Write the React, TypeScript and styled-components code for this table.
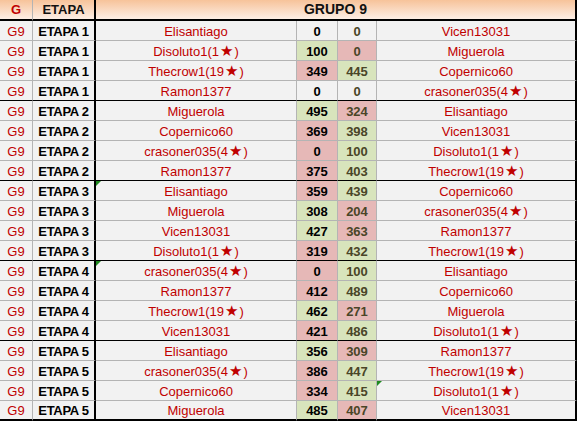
import React from 'react'
import styled, { createGlobalStyle } from 'styled-components'

type Fill = 'none' | 'win' | 'lose'

interface Match {
  etapa: number
  home: string
  homeScore: number
  awayScore: number
  away: string
  homeFill: Fill
  awayFill: Fill
  noteHome?: boolean
  noteAway?: boolean
}

const rows: Match[] = [
  { etapa: 1, home: 'Elisantiago', homeScore: 0, awayScore: 0, away: 'Vicen13031', homeFill: 'none', awayFill: 'none' },
  { etapa: 1, home: 'Disoluto1(1★)', homeScore: 100, awayScore: 0, away: 'Miguerola', homeFill: 'win', awayFill: 'lose' },
  { etapa: 1, home: 'Thecrow1(19★)', homeScore: 349, awayScore: 445, away: 'Copernico60', homeFill: 'lose', awayFill: 'win' },
  { etapa: 1, home: 'Ramon1377', homeScore: 0, awayScore: 0, away: 'crasoner035(4★)', homeFill: 'none', awayFill: 'none' },
  { etapa: 2, home: 'Miguerola', homeScore: 495, awayScore: 324, away: 'Elisantiago', homeFill: 'win', awayFill: 'lose' },
  { etapa: 2, home: 'Copernico60', homeScore: 369, awayScore: 398, away: 'Vicen13031', homeFill: 'lose', awayFill: 'win' },
  { etapa: 2, home: 'crasoner035(4★)', homeScore: 0, awayScore: 100, away: 'Disoluto1(1★)', homeFill: 'lose', awayFill: 'win' },
  { etapa: 2, home: 'Ramon1377', homeScore: 375, awayScore: 403, away: 'Thecrow1(19★)', homeFill: 'lose', awayFill: 'win' },
  { etapa: 3, home: 'Elisantiago', homeScore: 359, awayScore: 439, away: 'Copernico60', homeFill: 'lose', awayFill: 'win', noteHome: true },
  { etapa: 3, home: 'Miguerola', homeScore: 308, awayScore: 204, away: 'crasoner035(4★)', homeFill: 'win', awayFill: 'lose' },
  { etapa: 3, home: 'Vicen13031', homeScore: 427, awayScore: 363, away: 'Ramon1377', homeFill: 'win', awayFill: 'lose' },
  { etapa: 3, home: 'Disoluto1(1★)', homeScore: 319, awayScore: 432, away: 'Thecrow1(19★)', homeFill: 'lose', awayFill: 'win' },
  { etapa: 4, home: 'crasoner035(4★)', homeScore: 0, awayScore: 100, away: 'Elisantiago', homeFill: 'lose', awayFill: 'win', noteHome: true },
  { etapa: 4, home: 'Ramon1377', homeScore: 412, awayScore: 489, away: 'Copernico60', homeFill: 'lose', awayFill: 'win' },
  { etapa: 4, home: 'Thecrow1(19★)', homeScore: 462, awayScore: 271, away: 'Miguerola', homeFill: 'win', awayFill: 'lose' },
  { etapa: 4, home: 'Vicen13031', homeScore: 421, awayScore: 486, away: 'Disoluto1(1★)', homeFill: 'lose', awayFill: 'win' },
  { etapa: 5, home: 'Elisantiago', homeScore: 356, awayScore: 309, away: 'Ramon1377', homeFill: 'win', awayFill: 'lose' },
  { etapa: 5, home: 'crasoner035(4★)', homeScore: 386, awayScore: 447, away: 'Thecrow1(19★)', homeFill: 'lose', awayFill: 'win' },
  { etapa: 5, home: 'Copernico60', homeScore: 334, awayScore: 415, away: 'Disoluto1(1★)', homeFill: 'lose', awayFill: 'win', noteAway: true },
  { etapa: 5, home: 'Miguerola', homeScore: 485, awayScore: 407, away: 'Vicen13031', homeFill: 'win', awayFill: 'lose' },
]

const fills: Record<Fill, string> = {
  none: '#f2f2f2',
  win: '#d8e4bc',
  lose: '#e6b8b7',
}

// splits the star out so it can be drawn a bit bigger, like in the sheet
const PlayerName = ({ name }: { name: string }) => {
  const parts = name.split('★')
  if (parts.length === 1) return <>{name}</>
  return (
    <>
      {parts[0]}
      <Star>★</Star>
      {parts[1]}
    </>
  )
}

const App = () => {
  return (
    <>
      <GlobalStyle />
      <Sheet>
        <HeadCell $line="gray" $red>G</HeadCell>
        <HeadCell $line="black">ETAPA</HeadCell>
        <GroupHead>GRUPO 9</GroupHead>
        {rows.map((r, i) => {
          const groupEnd = i % 4 === 3
          const last = i === rows.length - 1
          const bottom = last ? 'last' : groupEnd ? 'group' : 'row'
          return (
            <React.Fragment key={i}>
              <GroupCell $bottom={bottom}>G9</GroupCell>
              <EtapaCell $bottom={bottom}>ETAPA {r.etapa}</EtapaCell>
              <NameCell $bottom={bottom}>
                {r.noteHome && <Note />}
                <PlayerName name={r.home} />
              </NameCell>
              <ScoreCell $bottom={bottom} $fill={r.homeFill}>
                {r.homeScore}
              </ScoreCell>
              <ScoreCell $bottom={bottom} $fill={r.awayFill} $away>
                {r.awayScore}
              </ScoreCell>
              <NameCell $bottom={bottom} $edge>
                {r.noteAway && <Note />}
                <PlayerName name={r.away} />
              </NameCell>
            </React.Fragment>
          )
        })}
      </Sheet>
    </>
  )
}

const GlobalStyle = createGlobalStyle`
  html, body {
    margin: 0;
    padding: 0;
    background: #ffffff;
  }
  body {
    font-family: "Liberation Sans", Arial, sans-serif;
  }
`

const Sheet = styled.div`
  display: grid;
  grid-template-columns: 33px 63px 201px 41px 39px 200px;
  grid-auto-rows: 20px;
  grid-template-rows: 21px;
  width: 577px;
  background: #f2f2f2;
`

const HeadCell = styled.div<{ $line: 'gray' | 'black'; $red?: boolean }>`
  box-sizing: border-box;
  height: 21px;
  display: flex;
  align-items: center;
  justify-content: center;
  padding-bottom: 1px;
  background: linear-gradient(#f7c39a, #fdeee5);
  border-bottom: 2px solid #000;
  border-right: ${(p) => (p.$line === 'black' ? '2px solid #000' : '1px solid #b4b4b4')};
  font-weight: bold;
  font-size: 13px;
  color: ${(p) => (p.$red ? '#c00000' : '#111')};
`

const GroupHead = styled.div`
  grid-column: 3 / span 4;
  box-sizing: border-box;
  height: 21px;
  display: flex;
  align-items: center;
  justify-content: center;
  padding-bottom: 1px;
  background: linear-gradient(#f7c39a, #fdeee5);
  border-bottom: 2px solid #000;
  border-right: 2px solid #000;
  font-weight: bold;
  font-size: 14px;
  color: #111;
`

type Bottom = 'row' | 'group' | 'last'

const bottomLine = (b: Bottom) =>
  b === 'last' ? '2px solid #000' : b === 'group' ? '1px solid #000' : '1px solid #b4b4b4'

const BaseCell = styled.div<{ $bottom: Bottom }>`
  box-sizing: border-box;
  position: relative;
  display: flex;
  align-items: center;
  justify-content: center;
  height: 20px;
  padding-top: 1px;
  white-space: nowrap;
  font-size: 13px;
  border-bottom: ${(p) => bottomLine(p.$bottom)};
  border-right: 1px solid #b4b4b4;
`

const GroupCell = styled(BaseCell)`
  color: #c00000;
`

const EtapaCell = styled(BaseCell)`
  font-weight: bold;
  color: #000;
  letter-spacing: -0.3px;
  border-right: 2px solid #000;
`

const NameCell = styled(BaseCell)<{ $edge?: boolean }>`
  color: #c00000;
  border-right: ${(p) => (p.$edge ? '2px solid #000' : '1px solid #b4b4b4')};
`

const ScoreCell = styled(BaseCell)<{ $fill: Fill; $away?: boolean }>`
  font-weight: bold;
  background: ${(p) => fills[p.$fill]};
  color: ${(p) => (p.$away ? '#4a4527' : '#000')};
`

const Star = styled.span`
  font-family: "DejaVu Sans", sans-serif;
  font-size: 15px;
  line-height: 1;
  margin: 0 1px;
`

const Note = styled.span`
  position: absolute;
  top: 0;
  left: 0;
  width: 0;
  height: 0;
  border-top: 5px solid #1f8a1f;
  border-right: 5px solid transparent;
`

export default App
